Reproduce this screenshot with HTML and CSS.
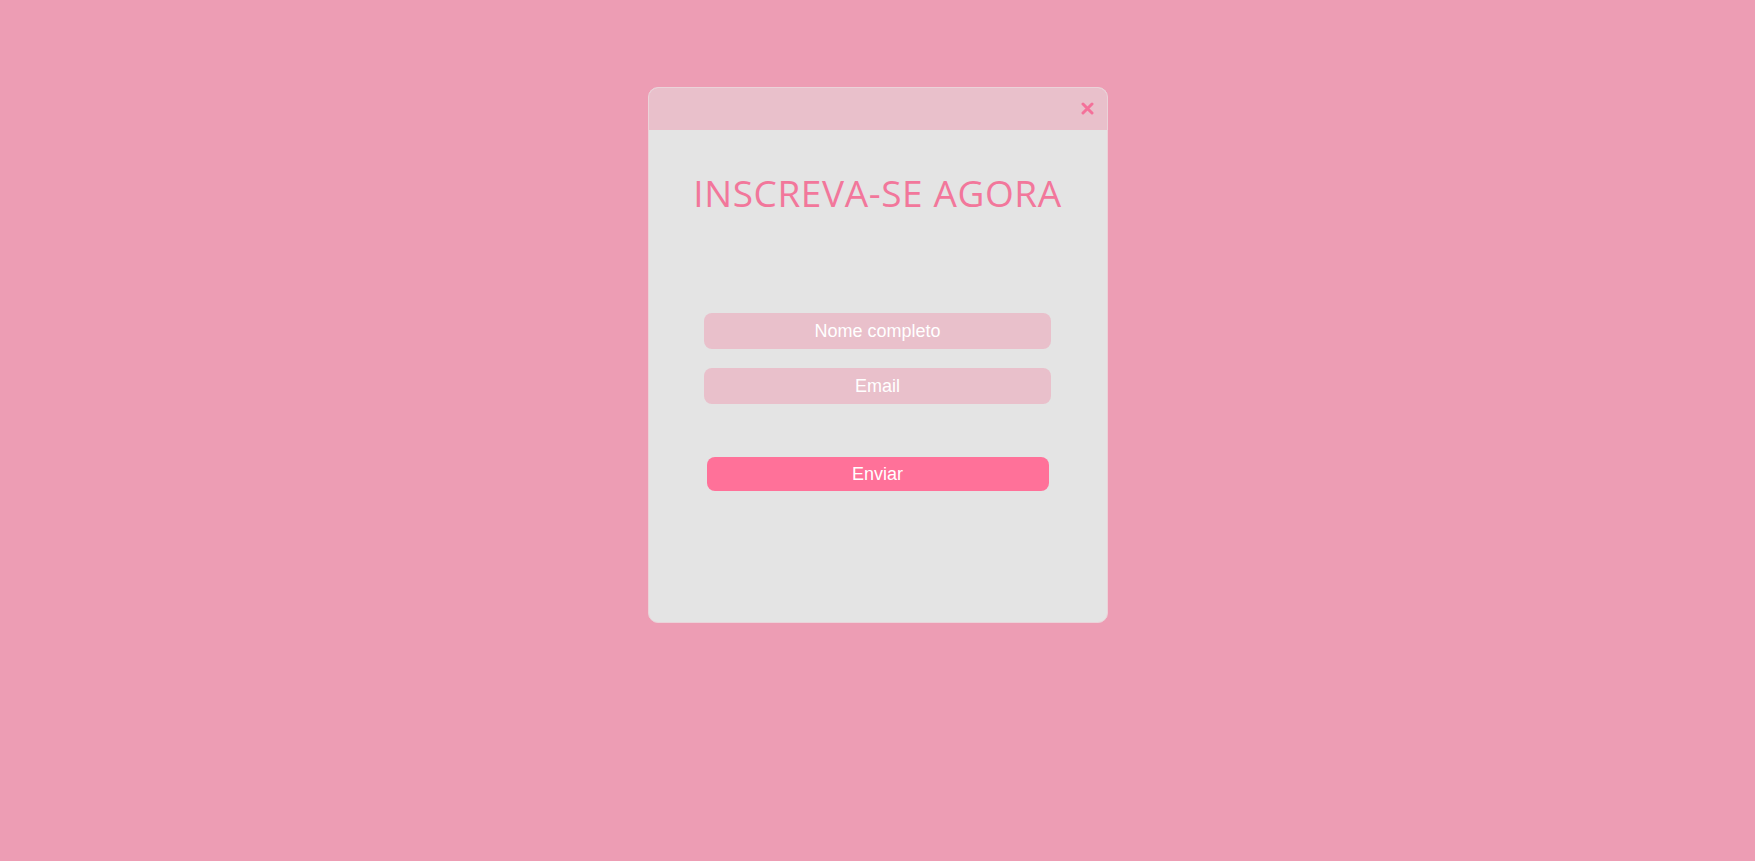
FILE: index.html
```html
<!DOCTYPE html>
<html lang="pt">
<head>
<meta charset="utf-8">
<title>Inscreva-se</title>
<link rel="stylesheet" href="styles.css">
</head>
<body>
<div class="modal">
  <div class="modal-header">
    <svg class="close" width="13" height="13" viewBox="0 0 13 13" aria-label="Fechar">
      <path d="M2 2 L11 11 M11 2 L2 11" stroke="#f4719a" stroke-width="3" stroke-linecap="round"/>
    </svg>
  </div>
  <div class="modal-body">
    <h1 class="title">INSCREVA-SE AGORA</h1>
    <form class="form">
      <input class="field" type="text" placeholder="Nome completo">
      <input class="field" type="email" placeholder="Email">
      <button class="submit" type="button">Enviar</button>
    </form>
  </div>
</div>
</body>
</html>
```
FILE: styles.css
```css
* { box-sizing: border-box; }
html, body { height: 100%; }
body {
  margin: 0;
  background: #ed9db4;
  font-family: "Liberation Sans", Arial, sans-serif;
  display: flex;
  justify-content: center;
  align-items: flex-start;
}
.modal {
  margin-top: 87px;
  width: 460px;
  height: 536px;
  background: #e4e4e4;
  border: 1px solid #ebd3d9;
  border-radius: 10px;
  overflow: hidden;
  display: flex;
  flex-direction: column;
}
.modal-header {
  height: 42px;
  background: #e9c0cb;
  display: flex;
  justify-content: flex-end;
  align-items: flex-start;
  padding: 14px 13px 0 0;
}
.close {
  display: block;
  cursor: pointer;
}
.modal-body {
  display: flex;
  flex-direction: column;
  align-items: center;
}
.title {
  margin: 38px 0 0;
  font-family: "Open Sans", sans-serif;
  font-weight: 400;
  font-size: 37px;
  line-height: 50px;
  letter-spacing: 0.6px;
  color: #f2779b;
}
.form {
  margin-top: 95px;
  display: flex;
  flex-direction: column;
  align-items: center;
}
.field {
  width: 347px;
  height: 36px;
  margin-bottom: 19px;
  border: none;
  border-radius: 8px;
  background: #e9c0cb;
  text-align: center;
  font-family: "Liberation Sans", Arial, sans-serif;
  font-size: 18px;
  color: #fff;
  outline: none;
}
.field::placeholder { color: #fff; opacity: 1; }
.submit {
  margin-top: 34px;
  width: 342px;
  height: 34px;
  border: none;
  border-radius: 8px;
  background: #ff7199;
  color: #fff;
  font-family: "Liberation Sans", Arial, sans-serif;
  font-size: 18px;
  cursor: pointer;
}
```
